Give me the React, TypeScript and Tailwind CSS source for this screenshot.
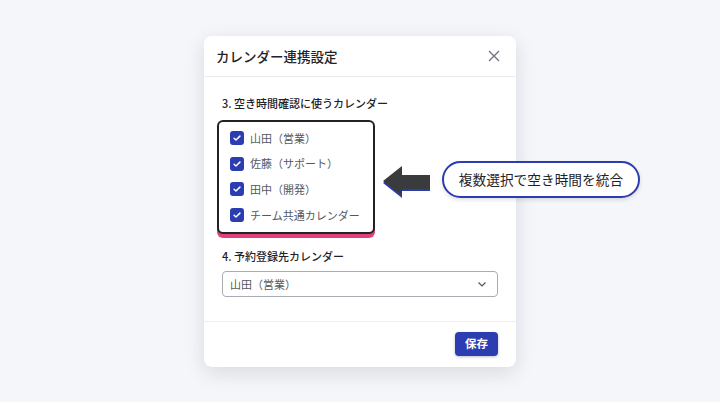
import React from "react";

const font = { fontFamily: '"Noto Sans CJK JP", "Noto Sans", sans-serif' };

const calendars = ["山田（営業）", "佐藤（サポート）", "田中（開発）", "チーム共通カレンダー"];

const Check = () => (
  <span className="flex h-[14px] w-[14px] items-center justify-center rounded-[3px] bg-[#2b3db0]">
    <svg width="10" height="10" viewBox="0 0 24 24" fill="none" stroke="white" strokeWidth="3.5" strokeLinecap="round" strokeLinejoin="round">
      <path d="M5 12.5l4.5 4.5L19 7.5" />
    </svg>
  </span>
);

const App = () => {
  return (
    <div className="relative flex h-[402px] w-[720px] items-center justify-center bg-[#f4f6f9]" style={font}>
      <div className="relative mt-[1px] w-[312px] rounded-lg bg-white shadow-[0_6px_20px_rgba(15,23,42,0.12)]">
        <div className="flex h-[41px] items-center justify-between border-b border-[#e8eaee] pl-3 pr-4">
          <p className="text-[13.5px] font-medium text-[#1f2328]">カレンダー連携設定</p>
          <svg width="12" height="12" viewBox="0 0 12 12" stroke="#6b7280" strokeWidth="1.3">
            <path d="M1 1l10 10M11 1L1 11" />
          </svg>
        </div>

        <div className="px-[18px] pb-[24px] pt-[17px]">
          <p className="text-[11px] font-medium leading-[18px] text-[#1f2328]">3. 空き時間確認に使うカレンダー</p>
          <div className="mt-[8px] ml-[-5px] w-[158px] rounded-[6px] border-2 border-[#222] bg-white pb-[4px] pl-[11px] pt-[3px] shadow-[0_4px_0_#e23f7d]">
            {calendars.map((c) => (
              <div key={c} className="flex h-[25.7px] items-center gap-[6px]">
                <Check />
                <span className="text-[11px] text-[#55595f]">{c}</span>
              </div>
            ))}
          </div>
          <p className="mt-[13px] text-[11px] font-medium leading-[18px] text-[#1f2328]">4. 予約登録先カレンダー</p>
          <div className="mt-[6px] flex h-[26px] items-center justify-between rounded-[4px] border border-[#a9adb3] pl-[7px] pr-[9px]">
            <span className="text-[11px] text-[#55595f]">山田（営業）</span>
            <svg width="12" height="12" viewBox="0 0 12 12" fill="none" stroke="#555" strokeWidth="1.2">
              <path d="M2.5 4.5l3.5 3.5 3.5-3.5" />
            </svg>
          </div>
        </div>

        <div className="flex justify-end border-t border-[#eceef1] px-[18px] pb-[11px] pt-[10px]">
          <button className="h-[24px] w-[43px] rounded-[4px] bg-[#2b3db0] text-[11.5px] font-bold text-white shadow-[0_1px_3px_rgba(0,0,0,0.25)]">
            保存
          </button>
        </div>
      </div>

      <svg className="absolute left-[382px] top-[164px]" width="50" height="34" viewBox="0 0 50 34">
        <path d="M1 17 L20 2 L20 11 L48 11 L48 25 L20 25 L20 32 Z" fill="#2b3db0" transform="translate(0 2)" />
        <path d="M1 17 L20 2 L20 11 L48 11 L48 25 L20 25 L20 32 Z" fill="#3a3b3d" />
      </svg>

      <div className="absolute left-[442px] top-[161px] flex h-[37px] w-[198px] items-center justify-center rounded-full border-2 border-[#2b3db0] bg-white shadow-[0_2px_4px_rgba(0,0,0,0.12)]">
        <span className="text-[13.7px] text-[#1f2328]">複数選択で空き時間を統合</span>
      </div>
    </div>
  );
};

export default App;
